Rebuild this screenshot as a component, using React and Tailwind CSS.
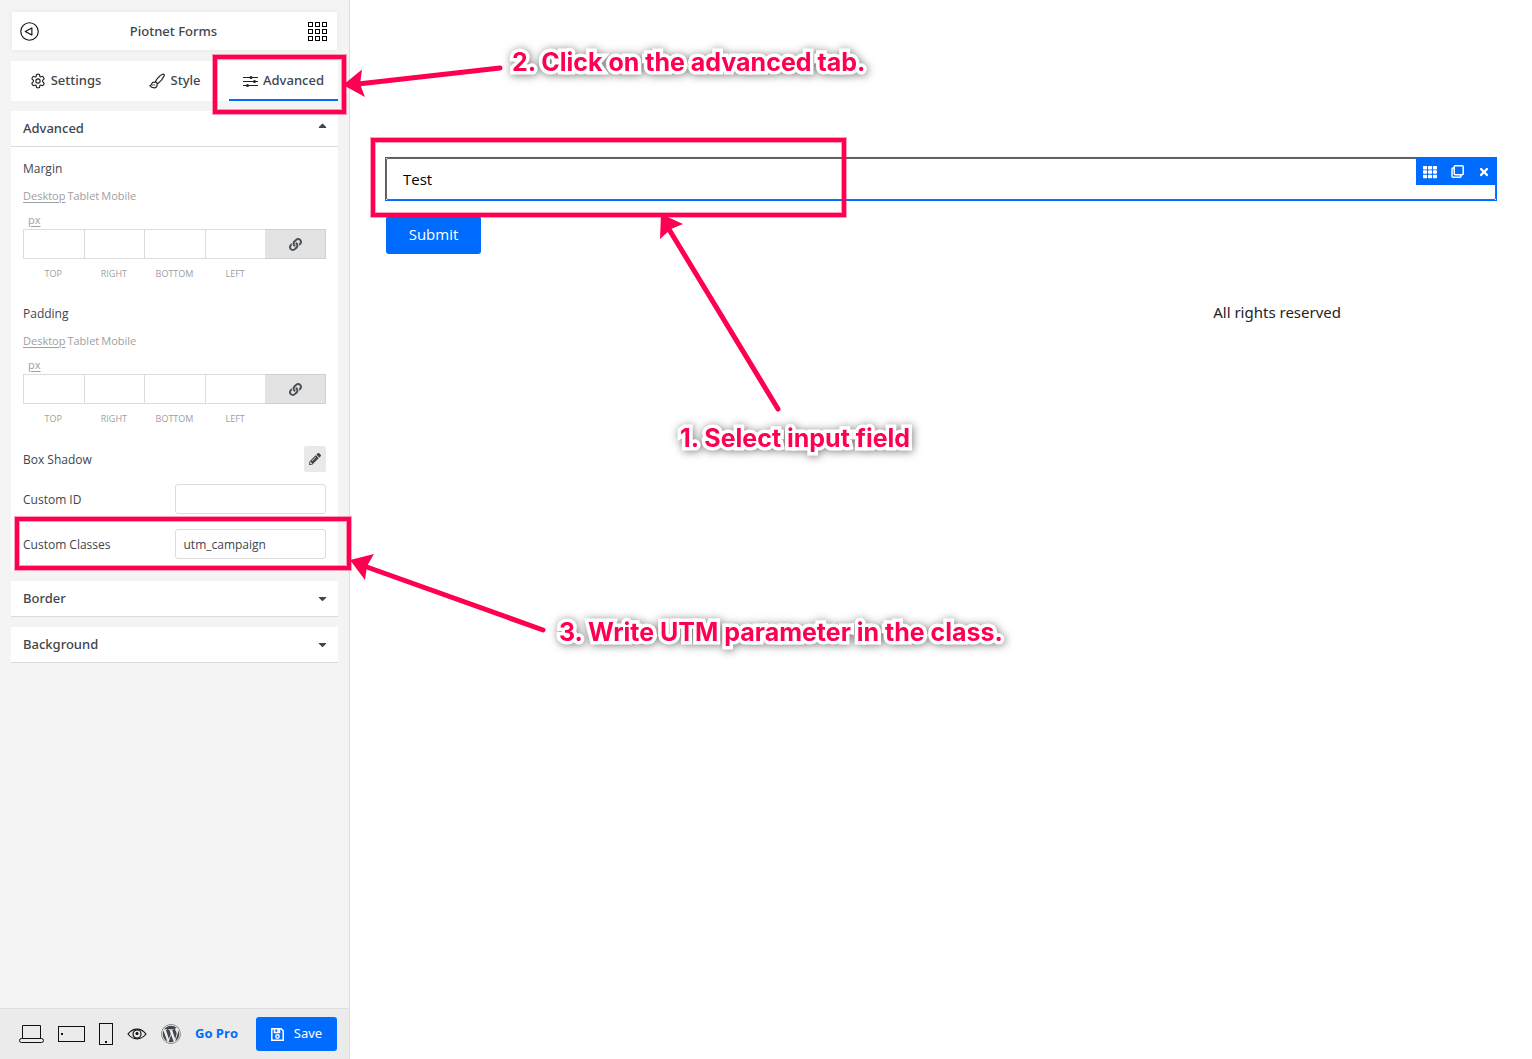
import React from "react";
import { FaLink, FaPencilAlt, FaCaretUp, FaCaretDown, FaWordpress, FaTh, FaTimes } from "react-icons/fa";

const GearIcon = () => (
  <svg width="16" height="16" viewBox="0 0 24 24" fill="none" stroke="#1d2327" strokeWidth="1.7" strokeLinejoin="round" aria-hidden="true">
    <path d="M9.800 2.200Q12 1.200 14.200 2.200L14.800 5.300 16 6 19 5Q20.900 6.400 21.200 8.800L18.900 11V13L21.200 15.200Q20.900 17.600 19 19L16 18 14.800 18.700 14.200 21.800Q12 22.800 9.800 21.800L9.200 18.700 8 18 5 19Q3.100 17.600 2.800 15.200L5.100 13V11L2.800 8.800Q3.100 6.400 5 5L8 6 9.200 5.300z" />
    <circle cx="12" cy="12" r="3.200" />
  </svg>
);

const BrushIcon = () => (
  <svg width="17" height="16" viewBox="0 0 17 16" fill="none" stroke="#1d2327" strokeWidth="1.2" strokeLinejoin="round" strokeLinecap="round" aria-hidden="true">
    <path d="M6.500 8.500C8.500 5 11 2.500 13.500 1.300c1.200-.6 2.200.3 1.700 1.500C14 5.700 11.500 8.700 8.700 10.800z" />
    <path d="M8 11.300c.5 2-.9 3.500-2.800 3.500-2 0-3.500-.9-4.400-2.100 1.500 0 1.400-1 1.900-2 .7-1.400 2.300-1.700 3.500-1.200" />
    <path d="M3.200 12.300c.8-.8 1.800-.6 2.600-.2" strokeWidth="0.8" />
  </svg>
);

const SlidersIcon = () => (
  <svg width="15" height="12" viewBox="0 0 15 12" fill="none" stroke="#1d2327" aria-hidden="true">
    <path d="M0 2.500h15M0 6.500h15M0 10.500h15" />
    <g fill="#1d2327" stroke="none">
      <circle cx="8" cy="2.500" r="1.500" />
      <circle cx="11.500" cy="6.500" r="1.500" />
      <circle cx="4.500" cy="10.500" r="1.500" />
    </g>
  </svg>
);

const FloppyIcon = () => (
  <svg width="13" height="13" viewBox="0 0 13 13" fill="none" stroke="white" strokeWidth="1.500" aria-hidden="true">
    <path d="M.8.8h9.400l2 2v9.400H.8z" />
    <path d="M3.500 1v3.500h5V1" />
    <path d="M7 1v3" />
    <circle cx="6.500" cy="8.500" r="1.700" />
  </svg>
);

const CopyIcon = () => (
  <svg width="13" height="13" viewBox="0 0 13 13" fill="none" stroke="white" strokeWidth="1.500" aria-hidden="true">
    <rect x="3.200" y=".8" width="9" height="9" rx="1" />
    <path d="M3 3H2a1 1 0 0 0-1 1v7.200a1 1 0 0 0 1 1h7a1 1 0 0 0 1-1V10" />
  </svg>
);

function Spacing({ name }) {
  return (
    <fieldset>
      <legend className="text-xs leading-5">{name}</legend>
      <div className="mt-[9px] flex gap-0.5 text-[11px] leading-4 text-[#a0a0a0]">
        <button type="button" className="underline underline-offset-2">Desktop</button>
        <button type="button">Tablet</button>
        <button type="button">Mobile</button>
      </div>
      <div className="mt-2 mb-px pl-[5px] text-[11px] leading-4 text-[#a0a0a0]">
        <button type="button" className="block underline underline-offset-2">px</button>
      </div>
      <div className="grid grid-cols-5 text-center text-[9px] leading-4 text-[#a0a0a0]">
        {["Top", "Right", "Bottom", "Left"].map((side) => (
          <label key={side} className="block uppercase">
            <input type="text" className="mb-[7px] block h-[30px] w-full border-y border-l border-[#dcdcdc] bg-white px-2 text-xs text-[#32373c] outline-none" />
            {side}
          </label>
        ))}
        <button type="button" aria-label="Link values" className="flex h-[30px] items-center justify-center border border-l-0 border-[#d0d0d0] bg-[#e3e3e3] text-[#495157]">
          <FaLink size={13} />
        </button>
      </div>
    </fieldset>
  );
}

function Field({ label, value }) {
  return (
    <label className="flex items-center justify-between text-xs">
      <span className="pt-0.5">{label}</span>
      <input type="text" defaultValue={value} className="h-[30px] w-1/2 rounded-[3px] border border-[#dcdcdc] bg-white px-2 text-xs outline-none" />
    </label>
  );
}

function SectionHead({ title, open }) {
  return (
    <button type="button" aria-expanded={!!open} className="flex h-9 w-full items-center justify-between border-b border-[#d9dbdc] bg-white px-3 font-['Noto_Sans'] text-[13px] font-medium">
      {title}
      {open ? <FaCaretUp size={13} className="-mr-[3px] mb-1.5" /> : <FaCaretDown size={13} className="-mr-[3px] mb-px" />}
    </button>
  );
}

const tabs = [
  { name: "Settings", Icon: GearIcon },
  { name: "Style", Icon: BrushIcon },
  { name: "Advanced", Icon: SlidersIcon, active: true },
];

function Sidebar() {
  return (
    <aside className="flex w-[350px] shrink-0 flex-col border-r border-[#dfdfdf] bg-[#f4f4f4] text-[#40464d]">
      <div className="flex flex-1 flex-col px-[11px] pt-3">
        <header className="mx-px flex h-[38px] items-center justify-between bg-white pr-2.5 pl-2 shadow-[0_0_6px_rgba(0,0,0,0.06)]">
          <button type="button" aria-label="Back">
            <svg width="19" height="19" viewBox="0 0 20 20" fill="none" stroke="#111" strokeWidth="1.200" aria-hidden="true">
              <circle cx="10" cy="10" r="9.200" />
              <path d="M5.500 10l7-3.800v7.600z" strokeLinejoin="round" />
            </svg>
          </button>
          <h1 className="pt-0.5 font-['Noto_Sans'] text-[13px] font-medium">Piotnet Forms</h1>
          <button type="button" aria-label="Widgets">
            <svg width="19" height="19" viewBox="0 0 19 19" fill="none" stroke="#000" aria-hidden="true">
              {[0, 7, 14].map((y) => [0, 7, 14].map((x) => <rect key={`${x}-${y}`} x={x + 0.5} y={y + 0.5} width="4" height="4" />))}
            </svg>
          </button>
        </header>

        <nav className="mt-[11px] grid h-10 grid-cols-3 bg-white font-['Noto_Sans'] text-[13px] font-medium">
          {tabs.map(({ name, Icon, active }) => (
            <button
              key={name}
              type="button"
              className={`flex items-center justify-center gap-[5px] border-b-2 pt-0.5 ${active ? "border-[#006bff]" : "border-transparent"}`}
            >
              <Icon />
              {name}
            </button>
          ))}
        </nav>

        <section className="mt-2.5 bg-white">
          <SectionHead title="Advanced" open />
          <div className="px-3 py-3">
            <Spacing name="Margin" />
            <div className="mt-[22px]"><Spacing name="Padding" /></div>
            <div className="mt-[19px] flex items-center justify-between text-xs">
              <span className="pt-0.5">Box Shadow</span>
              <button type="button" aria-label="Edit box shadow" className="flex h-[26px] w-[22px] items-center justify-center rounded-[2px] bg-[#e9e9e7]">
                <FaPencilAlt size={12} />
              </button>
            </div>
            <div className="mt-3"><Field label="Custom ID" /></div>
            <div className="mt-[15px]"><Field label="Custom Classes" value="utm_campaign" /></div>
          </div>
        </section>
        <section className="mt-2.5"><SectionHead title="Border" /></section>
        <section className="mt-2.5"><SectionHead title="Background" /></section>
      </div>

      <footer className="flex h-[51px] items-center border-t border-[#dfdfdf] bg-[#ebebeb] pr-3 pl-[19px]">
        <button type="button" aria-label="Desktop view">
          <svg width="25" height="18" viewBox="0 0 25 18" fill="none" stroke="#111" aria-hidden="true">
            <path d="M3.500 13.500V.5h18v13" />
            <rect x=".5" y="13.500" width="24" height="4" rx="2" />
          </svg>
        </button>
        <button type="button" aria-label="Tablet view" className="ml-3.5">
          <svg width="27" height="16" viewBox="0 0 27 16" fill="none" stroke="#111" aria-hidden="true">
            <rect x=".5" y=".5" width="26" height="15" />
            <rect x="3" y="7" width="2" height="2" fill="#111" stroke="none" />
          </svg>
        </button>
        <button type="button" aria-label="Mobile view" className="ml-3.5">
          <svg width="14" height="22" viewBox="0 0 14 22" fill="none" stroke="#111" aria-hidden="true">
            <rect x=".5" y=".5" width="13" height="21" />
            <rect x="6" y="18" width="2" height="2" fill="#111" stroke="none" />
          </svg>
        </button>
        <button type="button" aria-label="Preview" className="ml-3.5">
          <svg width="20" height="12" viewBox="0 0 20 12" fill="none" stroke="#111" strokeWidth="1.200" aria-hidden="true">
            <path d="M1 6c2.300-3 5.400-4.900 9-4.900S16.700 3 19 6c-2.300 3-5.400 4.900-9 4.900S3.300 9 1 6z" />
            <circle cx="10" cy="6" r="4" />
            <circle cx="10" cy="5.500" r="1" fill="#111" />
          </svg>
        </button>
        <a href="#wordpress" aria-label="WordPress" className="ml-3.5"><FaWordpress size={20} /></a>
        <a href="#pro" className="ml-3.5 text-[13px] font-bold whitespace-nowrap text-[#006bff]">Go Pro</a>
        <button type="button" className="ml-auto flex h-[34px] w-[81px] items-center justify-center gap-2.5 rounded-[3px] bg-[#006bff] font-['Noto_Sans'] text-[13px] text-white">
          <FloppyIcon />
          Save
        </button>
      </footer>
    </aside>
  );
}

function Preview() {
  return (
    <main className="min-w-0 flex-1 bg-white px-[35px] pt-[157px] text-black">
      <div className="relative border border-[#006bff]">
        <input
          type="text"
          aria-label="Test"
          defaultValue="Test"
          className="block h-[42px] w-full rounded-[2px] border border-[#666] px-4 text-[15px] outline-none"
        />
        <div className="absolute top-0 right-0 flex h-[27px] w-20 items-center justify-between bg-[#006bff] pr-1.5 pl-[7px] text-white">
          <button type="button" aria-label="Move"><FaTh size={14} /></button>
          <button type="button" aria-label="Duplicate"><CopyIcon /></button>
          <button type="button" aria-label="Remove"><FaTimes size={12} /></button>
        </div>
      </div>
      <button type="button" className="mt-[15px] ml-px block h-[38px] w-[95px] rounded-[3px] bg-[#006bff] pb-0.5 text-[15px] text-white">
        Submit
      </button>
      <p className="mt-12 pr-[156px] text-right font-['Noto_Sans'] text-[15px] leading-5 text-[#1d2327]">All rights reserved</p>
    </main>
  );
}

const frame = "absolute border-4 border-[#ff0050] shadow-[0_0_0_1px_#ff005060,inset_0_0_0_1px_#ff005060]";
const note =
  "absolute whitespace-nowrap font-['Inter'] text-[25px] leading-8 font-bold text-[#ff0050] [-webkit-text-stroke:7px_white] [paint-order:stroke_fill] [filter:drop-shadow(1px_1px_4px_rgba(0,0,0,0.5))]";

function Annotations() {
  return (
    <div className="pointer-events-none absolute inset-0 overflow-hidden">
      <div className={`${frame} top-[55px] left-[213px] h-[59px] w-[133px]`} />
      <div className={`${frame} top-[138px] left-[371px] h-[79px] w-[475px]`} />
      <div className={`${frame} top-[517px] left-[15px] h-[53px] w-[336px]`} />
      <svg className="absolute top-0 left-0" width="900" height="700" fill="#ff0050" stroke="#ff0050" strokeWidth="5" strokeLinecap="round" aria-hidden="true">
        <path d="M500 68L358 84M778 409L667 226M543 630L364 566" />
        <path stroke="none" d="M343 85L362 69.500L360 84L365 97zM661 214L683 224L671 229L660 239zM350 560L374 554L367 566L365 580z" />
      </svg>
      <p className={`${note} top-[46px] left-[512px]`}>2. Click on the advanced tab.</p>
      <p className={`${note} top-[422px] left-[680px]`}>1. Select input field</p>
      <p className={`${note} top-[616px] left-[559px]`}>3. Write UTM parameter in the class.</p>
    </div>
  );
}

export default function App() {
  return (
    <div className="relative flex min-h-screen font-['Open_Sans','Noto_Sans',sans-serif]">
      <Sidebar />
      <Preview />
      <Annotations />
    </div>
  );
}
